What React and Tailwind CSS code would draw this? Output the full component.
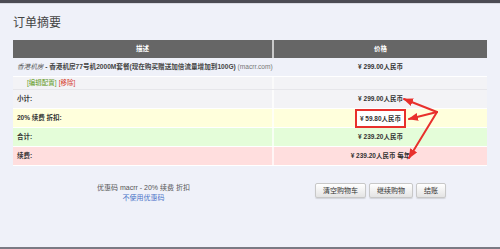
const ROWS = [
  { label: '小计:', price: '¥ 299.00人民币', bg: 'bg-[#f3f3f6]' },
  { label: '20% 续费 折扣:', price: '¥ 59.80人民币', bg: 'bg-[#ffffdc]', boxed: true },
  { label: '合计:', price: '¥ 239.20人民币', bg: 'bg-[#e4fdd9]' },
  { label: '续费:', price: '¥ 239.20人民币 每年', bg: 'bg-[#ffdede]' },
]

function Arrows() {
  return (
    <svg className="absolute inset-0 pointer-events-none" width="500" height="249" viewBox="0 0 500 249">
      <defs>
        <marker id="head" markerUnits="userSpaceOnUse" markerWidth="10" markerHeight="8" refX="9" refY="4" orient="auto">
          <path d="M0 0 L10 4 L0 8 Z" fill="#e8302c" />
        </marker>
      </defs>
      <g stroke="#e8302c" strokeWidth="2" fill="none" strokeLinecap="round">
        <line x1="437" y1="112" x2="404" y2="99" markerEnd="url(#head)" />
        <line x1="437" y1="112" x2="409" y2="119" markerEnd="url(#head)" />
        <line x1="437" y1="112" x2="409" y2="158" markerEnd="url(#head)" />
      </g>
    </svg>
  )
}

function Btn({ children }) {
  return (
    <button className="h-[15px] px-[7px] text-[7px] text-[#333] bg-gradient-to-b from-white to-[#e4e4e4] border border-[#c8c8c8] rounded-[2px] shadow-[0_1px_1px_rgba(0,0,0,0.12)] leading-none">
      {children}
    </button>
  )
}

export default function App() {
  return (
    <div className="relative w-[500px] h-[249px] overflow-hidden bg-[#eff1f9] font-['Liberation_Sans','Noto_Sans_CJK_SC',sans-serif] text-[#333]">
      <div className="h-[3px] bg-[#4c4c54]" />
      <div className="h-px bg-[#d9dbe3]" />

      <div className="px-[13px]">
        <h1 className="mt-[11px] text-[12px] leading-[14px] text-[#444] font-['Noto_Sans_CJK_SC',sans-serif]">订单摘要</h1>

        {/* table */}
        <div className="mt-[11px] w-[474px] text-[6.5px]">
          <div className="flex h-[18px] bg-[#666] text-white font-bold items-center">
            <div className="w-[261px] text-center border-r-2 border-[#c9c9c9] h-full flex items-center justify-center">描述</div>
            <div className="flex-1 text-center">价格</div>
          </div>

          <div className="flex h-[19px] items-center border-b border-white">
            <div className="w-[261px] pl-[4px] whitespace-nowrap text-[6.6px]">
              <i className="text-[#555]">香港机房</i>
              <span className="font-bold text-[#444]"> - 香港机房77号机2000M套餐(现在购买赠送加倍流量增加到100G)</span>
              <span className="text-[#777]"> (macrr.com)</span>
            </div>
            <div className="flex-1 text-center font-bold">¥ 299.00人民币</div>
          </div>

          <div className="flex h-[13px] items-center bg-[#f3f3f6] border-b border-[#e6e6ea]">
            <div className="w-[261px] pl-[14px] border-r-2 border-[#fafafa] h-full flex items-center">
              <span className="text-[#5e9a1c]">[编辑配置]</span>
              <span className="ml-[2px] text-[#d63a2a]">[移除]</span>
            </div>
            <div className="flex-1" />
          </div>

          {ROWS.map(r => (
            <div key={r.label} className={`flex h-[19px] items-center border-b border-white ${r.bg}`}>
              <div className="w-[261px] pl-[4px] font-bold h-full flex items-center border-r-2 border-white/70">{r.label}</div>
              <div className="flex-1 flex justify-center font-bold">
                {r.boxed ? (
                  <span className="bg-white border-2 border-[#e8302c] px-[3px] h-[19px] flex items-center -mb-px">{r.price}</span>
                ) : r.price}
              </div>
            </div>
          ))}
        </div>

        {/* footer */}
        <div className="mt-[16px] w-[474px] flex">
          <div className="w-[261px] flex flex-col items-center text-[7px] leading-[10px]">
            <span className="mt-[1px] text-[#555]">优惠码 macrr - 20% 续费 折扣</span>
            <span className="text-[#4a72c8]">不使用优惠码</span>
          </div>
          <div className="flex-1 flex justify-center gap-[3px] pt-px">
            <Btn>清空购物车</Btn>
            <Btn>继续购物</Btn>
            <Btn>结账</Btn>
          </div>
        </div>
      </div>

      <div className="absolute bottom-0 left-0 right-0 h-[2px] bg-[#7a7a84]" />
      <Arrows />
    </div>
  )
}
